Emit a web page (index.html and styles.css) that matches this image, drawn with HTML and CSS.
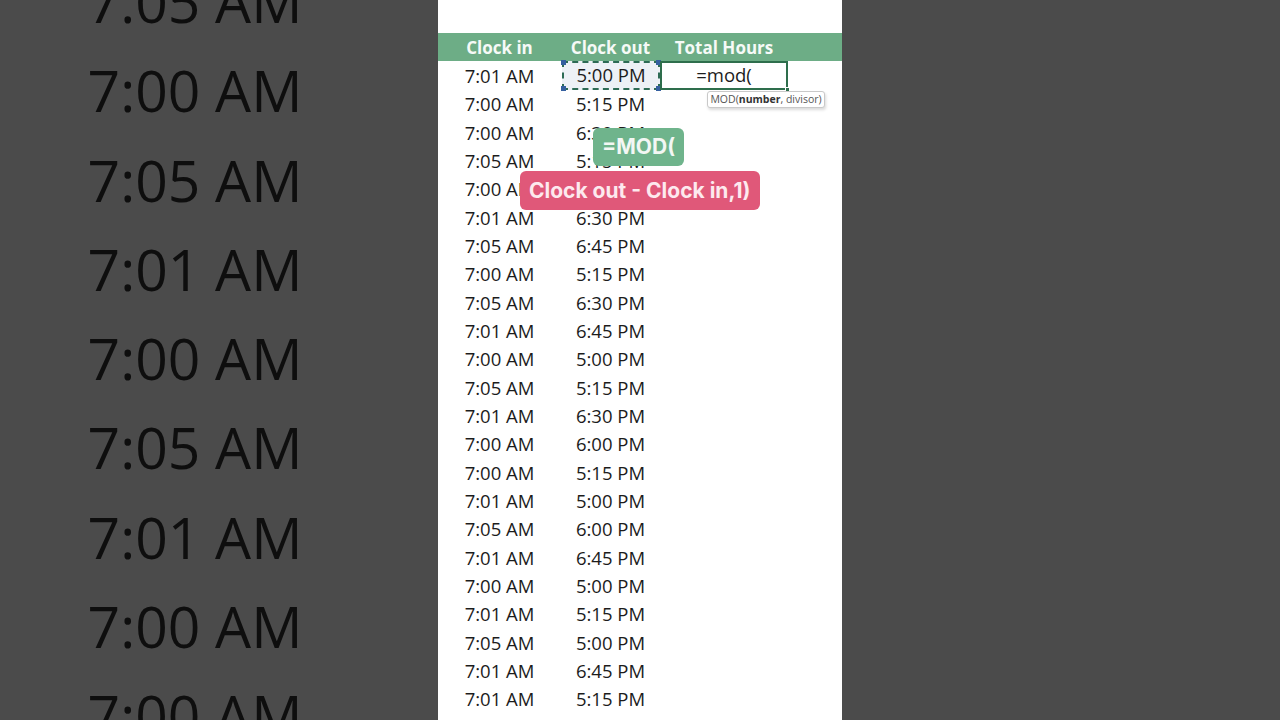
FILE: index.html
```html
<!doctype html>
<html>
    <head>
        <link rel="stylesheet" href="styles.css">
    </head>
    <body>
        <div class="screen">
            <div class="side left">
                <div class="bigrows">
                    <div class="big">7:05 AM</div>
                    <div class="big">7:00 AM</div>
                    <div class="big">7:05 AM</div>
                    <div class="big">7:01 AM</div>
                    <div class="big">7:00 AM</div>
                    <div class="big">7:05 AM</div>
                    <div class="big">7:01 AM</div>
                    <div class="big">7:00 AM</div>
                    <div class="big">7:00 AM</div>
                </div>
            </div>
            <div class="sheet">
                <div class="row head">
                    <div class="cell">Clock in</div>
                    <div class="cell">Clock out</div>
                    <div class="cell">Total Hours</div>
                </div>
                <div class="row">
                    <div class="cell">7:01 AM</div>
                    <div class="cell ref">5:00 PM
                        <span class="handle tl"></span><span class="handle tr"></span>
                        <span class="handle bl"></span><span class="handle br"></span>
                    </div>
                    <div class="cell active">=mod(<span class="fill"></span></div>
                </div>
                <div class="row"><div class="cell">7:00 AM</div><div class="cell">5:15 PM</div><div class="cell"></div></div>
                <div class="row"><div class="cell">7:00 AM</div><div class="cell">6:30 PM</div><div class="cell"></div></div>
                <div class="row"><div class="cell">7:05 AM</div><div class="cell">5:15 PM</div><div class="cell"></div></div>
                <div class="row"><div class="cell">7:00 AM</div><div class="cell">5:00 PM</div><div class="cell"></div></div>
                <div class="row"><div class="cell">7:01 AM</div><div class="cell">6:30 PM</div><div class="cell"></div></div>
                <div class="row"><div class="cell">7:05 AM</div><div class="cell">6:45 PM</div><div class="cell"></div></div>
                <div class="row"><div class="cell">7:00 AM</div><div class="cell">5:15 PM</div><div class="cell"></div></div>
                <div class="row"><div class="cell">7:05 AM</div><div class="cell">6:30 PM</div><div class="cell"></div></div>
                <div class="row"><div class="cell">7:01 AM</div><div class="cell">6:45 PM</div><div class="cell"></div></div>
                <div class="row"><div class="cell">7:00 AM</div><div class="cell">5:00 PM</div><div class="cell"></div></div>
                <div class="row"><div class="cell">7:05 AM</div><div class="cell">5:15 PM</div><div class="cell"></div></div>
                <div class="row"><div class="cell">7:01 AM</div><div class="cell">6:30 PM</div><div class="cell"></div></div>
                <div class="row"><div class="cell">7:00 AM</div><div class="cell">6:00 PM</div><div class="cell"></div></div>
                <div class="row"><div class="cell">7:00 AM</div><div class="cell">5:15 PM</div><div class="cell"></div></div>
                <div class="row"><div class="cell">7:01 AM</div><div class="cell">5:00 PM</div><div class="cell"></div></div>
                <div class="row"><div class="cell">7:05 AM</div><div class="cell">6:00 PM</div><div class="cell"></div></div>
                <div class="row"><div class="cell">7:01 AM</div><div class="cell">6:45 PM</div><div class="cell"></div></div>
                <div class="row"><div class="cell">7:00 AM</div><div class="cell">5:00 PM</div><div class="cell"></div></div>
                <div class="row"><div class="cell">7:01 AM</div><div class="cell">5:15 PM</div><div class="cell"></div></div>
                <div class="row"><div class="cell">7:05 AM</div><div class="cell">5:00 PM</div><div class="cell"></div></div>
                <div class="row"><div class="cell">7:01 AM</div><div class="cell">6:45 PM</div><div class="cell"></div></div>
                <div class="row"><div class="cell">7:01 AM</div><div class="cell">5:15 PM</div><div class="cell"></div></div>

                <div class="tip">MOD(<b>number</b>, divisor)</div>
                <div class="badge green">=MOD(</div>
                <div class="badge red">Clock out - Clock in,1)</div>
            </div>
            <div class="side right"></div>
        </div>
    </body>
</html>
```

FILE: styles.css
```css
*{
    margin: 0;
    padding: 0;
    box-sizing: border-box;
}
body{
    background: #4b4b4b;
    font-family: "Open Sans", "Liberation Sans", sans-serif;
    overflow: hidden;
}
.screen{
    display: flex;
    width: 1280px;
    height: 720px;
    overflow: hidden;
}
.side{
    width: 438px;
    height: 720px;
    background: #4b4b4b;
    overflow: hidden;
}
.bigrows{
    margin-top: -43px;
    width: 390px;
}
.big{
    height: 89.3px;
    line-height: 89.3px;
    font-size: 57px;
    color: #0e0e0e;
    text-align: center;
    filter: blur(0.4px);
}
.sheet{
    position: relative;
    width: 404px;
    height: 720px;
    background: #fff;
    padding-top: 32.5px;
}
.row{
    display: grid;
    grid-template-columns: 123px 99px 128px;
    height: 28.33px;
}
.cell{
    position: relative;
    text-align: center;
    font-size: 18.5px;
    line-height: 28.33px;
    padding-top: 1px;
    color: #1c1c1c;
}
.head{
    height: 28.5px;
    background: #6dad86;
}
.head .cell{
    font-size: 17px;
    font-weight: 700;
    line-height: 28.5px;
    padding-top: 1.5px;
    color: #f6faf7;
}
.ref{
    background: #edf1f6;
    border: 2px dashed #2d6b55;
    line-height: 24.33px;
    margin-left: 1px;
    padding-top: 0;
}
.handle{
    position: absolute;
    width: 5px;
    height: 5px;
    background: #3560a0;
}
.tl{ top: -3px; left: -3px; }
.tr{ top: -3px; right: -3px; }
.bl{ bottom: -3px; left: -3px; }
.br{ bottom: -3px; right: -3px; }
.active{
    border: 2px solid #2e6e4c;
    line-height: 24.33px;
    padding-top: 0;
}
.fill{
    position: absolute;
    right: -4px;
    bottom: -4px;
    width: 5px;
    height: 5px;
    background: #2e6e4c;
    border: 1px solid #fff;
}
.tip{
    position: absolute;
    left: 269px;
    top: 91px;
    width: 118px;
    height: 17px;
    font-size: 10.5px;
    line-height: 15px;
    color: #555;
    background: #fff;
    border: 1px solid #c9c9c9;
    border-radius: 3px;
    box-shadow: 1px 2px 3px rgba(0,0,0,0.15);
    text-align: center;
    white-space: nowrap;
}
.tip b{
    color: #333;
}
.badge{
    position: absolute;
    font-family: Inter, "Liberation Sans", sans-serif;
    font-weight: 700;
    font-size: 21px;
    border-radius: 6px;
    padding: 0 9px;
    white-space: nowrap;
}
.green{
    left: 155px;
    top: 128px;
    height: 38px;
    line-height: 38px;
    background: #6fb48c;
    color: #f3f7f4;
}
.red{
    left: 82px;
    top: 171px;
    height: 39px;
    line-height: 39px;
    background: #e05879;
    color: #fde9ee;
}
```
